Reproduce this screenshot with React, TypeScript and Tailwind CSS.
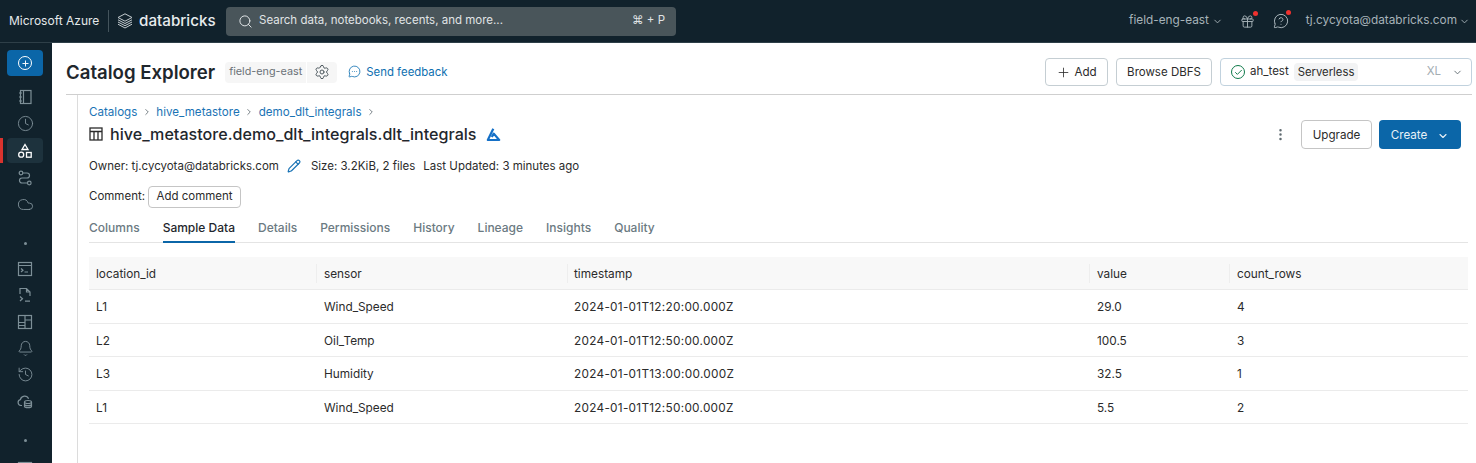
import { Bell, Check, ChevronDown, ChevronRight, Clock, Cloud, Gift, History, MessageCircleMore, MessageCircleQuestion, MoreVertical, Pencil, Plus, Search, Settings } from "lucide-react";

const rows = [
  ["L1", "Wind_Speed", "2024-01-01T12:20:00.000Z", "29.0", "4"],
  ["L2", "Oil_Temp", "2024-01-01T12:50:00.000Z", "100.5", "3"],
  ["L3", "Humidity", "2024-01-01T13:00:00.000Z", "32.5", "1"],
  ["L1", "Wind_Speed", "2024-01-01T12:50:00.000Z", "5.5", "2"],
];

const tabs = ["Columns", "Sample Data", "Details", "Permissions", "History", "Lineage", "Insights", "Quality"];

const gridCols = "grid grid-cols-[227px_251px_522px_140px_1fr]";

function RailIcon({ children, active }: { children: React.ReactNode; active?: boolean }) {
  return (
    <div className={`relative flex h-[25px] w-9 shrink-0 items-center justify-center rounded ${active ? "bg-[#1d323d] text-white" : "text-[#7d8f97]"}`}>
      {active && <span className="absolute left-[-7px] top-0 h-[25px] w-[3px] bg-[#d9332e]" />}
      {children}
    </div>
  );
}

function NotebookIcon() {
  return (
    <svg width="16" height="16" viewBox="0 0 16 16" fill="none" stroke="currentColor" strokeWidth="1.2">
      <rect x="3.5" y="1.5" width="10.5" height="13" />
      <path d="M6.5 1.5V14.5M2 4H5M2 8H5M2 12H5" />
    </svg>
  );
}

function CatalogIcon() {
  return (
    <svg width="16" height="16" viewBox="0 0 16 16" fill="none" stroke="currentColor" strokeWidth="1.3">
      <path d="M8 1.5 11 6.5H5Z" />
      <circle cx="4.2" cy="11.7" r="2.5" />
      <rect x="9.5" y="9.5" width="4.7" height="4.7" />
    </svg>
  );
}

function WorkflowIcon() {
  return (
    <svg width="16" height="16" viewBox="0 0 16 16" fill="none" stroke="currentColor" strokeWidth="1.2">
      <circle cx="4" cy="3" r="1.8" />
      <circle cx="12.3" cy="13" r="1.8" />
      <path d="M5.8 3H10A2.5 2.5 0 0 1 10 8H5A2.5 2.5 0 0 0 5 13H10.5" />
    </svg>
  );
}

function TerminalWindowIcon() {
  return (
    <svg width="16" height="16" viewBox="0 0 16 16" fill="none" stroke="currentColor" strokeWidth="1.2">
      <rect x="1.5" y="1.5" width="13" height="13" />
      <path d="M1.5 4.5H14.5M4 7.5 6 9.2 4 11M7.5 11H11" />
    </svg>
  );
}

function QueryFileIcon() {
  return (
    <svg width="16" height="16" viewBox="0 0 16 16" fill="none" stroke="currentColor" strokeWidth="1.2">
      <path d="M3 7V1.5H9.5L13 5V9M9.5 1.5V5H13" />
      <path d="M3 9.5 5.5 11.7 3 14M8 14.2H13" />
    </svg>
  );
}

function DashboardIcon() {
  return (
    <svg width="16" height="16" viewBox="0 0 16 16" fill="none" stroke="currentColor" strokeWidth="1.2">
      <rect x="1.5" y="1.5" width="13" height="13" />
      <path d="M8 1.5V14.5M1.5 8.5H8M8 6H14.5M1.5 11.5H8" />
    </svg>
  );
}

function CloudDbIcon() {
  return (
    <svg width="16" height="16" viewBox="0 0 16 16" fill="none" stroke="currentColor" strokeWidth="1.2">
      <path d="M5 12.5H3.8A3 3 0 0 1 3.4 6.6 4.3 4.3 0 0 1 11.6 5.8" />
      <ellipse cx="11" cy="9" rx="3.5" ry="1.5" />
      <path d="M7.5 9V13.2C7.5 14 9 14.6 11 14.6S14.5 14 14.5 13.2V9M7.5 11.2C7.5 12 9 12.6 11 12.6S14.5 12 14.5 11.2" />
    </svg>
  );
}

function DatabricksMark() {
  return (
    <svg width="16" height="16" viewBox="0 0 16 16" fill="none" stroke="#c4ccd0" strokeWidth="1">
      <path d="M8 .8 15 4.5 8 8.2 1 4.5Z" />
      <path d="M1 6.8 8 10.5 15 6.8M1 9 8 12.7 15 9M1 11.2 8 15 15 11.2" />
    </svg>
  );
}

function TableIcon() {
  return (
    <svg width="14" height="14" viewBox="0 0 14 14" fill="none" stroke="#2b2b2b" strokeWidth="1.3">
      <rect x="1" y="1" width="12" height="12" />
      <path d="M1 4.5H13M5 4.5V13M9 4.5V13" />
    </svg>
  );
}

function AzureDeltaIcon() {
  return (
    <svg width="15" height="15" viewBox="0 0 15 15" fill="none" stroke="#1570c7" strokeWidth="2.2">
      <path d="M7.3 1.8 1.8 13H13.2L7.8 6.6 5.8 10" strokeLinejoin="round" />
    </svg>
  );
}

export default function App() {
  return (
    <div className="flex h-[463px] w-[1476px] flex-col overflow-hidden bg-white font-['Inter',sans-serif] text-[11.5px] text-[#2b2b2b]">
      {/* Top bar */}
      <header className="flex h-[43px] shrink-0 items-center border-b border-[#2e3f48] bg-[#11222c] pl-[9px] pr-[6px] text-[#a7b3b9]">
        <span className="w-[91px] whitespace-nowrap text-[12px] leading-none text-[#e4e8ea]">Microsoft Azure</span>
        <span className="ml-2 h-[22px] w-px bg-[#44545c]" />
        <span className="ml-2 flex items-center gap-[6px]">
          <DatabricksMark />
          <span className="w-[77px] whitespace-nowrap text-[15.2px] font-medium leading-none text-[#e8ecee]">databricks</span>
        </span>
        <div className="ml-[10px] flex h-[29px] w-[450px] items-center rounded bg-[#49555a] pl-[12px] pr-[11px] text-[#e0e4e6]">
          <Search size={15} strokeWidth={1.6} />
          <span className="ml-[6px] text-[11.5px]">Search data, notebooks, recents, and more...</span>
          <span className="ml-auto text-[11.5px]">⌘ + P</span>
        </div>
        <div className="ml-auto flex items-center">
          <span className="text-[11.8px]">field-eng-east</span>
          <ChevronDown size={11} className="ml-[3px]" />
          <span className="relative ml-[17px]">
            <Gift size={15} strokeWidth={1.5} />
            <span className="absolute right-[-3px] top-[-3px] h-[5px] w-[5px] rounded-full bg-[#f0312e]" />
          </span>
          <span className="relative ml-[18px]">
            <MessageCircleQuestion size={16} strokeWidth={1.5} />
            <span className="absolute right-[-2px] top-[-3px] h-[5px] w-[5px] rounded-full bg-[#f0312e]" />
          </span>
          <span className="ml-[17px] text-[11.8px]">tj.cycyota@databricks.com</span>
          <ChevronDown size={11} className="ml-[2px]" />
        </div>
      </header>

      <div className="flex min-h-0 flex-1">
        {/* Left rail */}
        <aside className="flex w-[52px] shrink-0 flex-col items-start overflow-hidden bg-[#11222c] pl-[7px] pt-[7px]">
          <div className="mb-2 flex h-[26px] w-9 shrink-0 items-center justify-center rounded bg-[#0b66a8] text-white">
            <span className="flex h-[14px] w-[14px] items-center justify-center rounded-full border-[1.5px] border-white">
              <Plus size={9} strokeWidth={2.5} />
            </span>
          </div>
          <div className="flex flex-col gap-[2px]">
            <RailIcon><NotebookIcon /></RailIcon>
            <RailIcon><Clock size={17} strokeWidth={1.3} /></RailIcon>
            <RailIcon active><CatalogIcon /></RailIcon>
            <RailIcon><WorkflowIcon /></RailIcon>
            <RailIcon><Cloud size={17} strokeWidth={1.3} /></RailIcon>
          </div>
          <span className="ml-[16.5px] mb-[11px] mt-[25px] h-[3px] w-[3px] shrink-0 rounded-full bg-[#7d8f97]" />
          <div className="flex flex-col gap-[1.5px]">
            <RailIcon><TerminalWindowIcon /></RailIcon>
            <RailIcon><QueryFileIcon /></RailIcon>
            <RailIcon><DashboardIcon /></RailIcon>
            <RailIcon><Bell size={17} strokeWidth={1.3} /></RailIcon>
            <RailIcon><History size={17} strokeWidth={1.3} /></RailIcon>
            <RailIcon><CloudDbIcon /></RailIcon>
          </div>
          <span className="ml-[16.5px] mb-[15px] mt-[25px] h-[3px] w-[3px] shrink-0 rounded-full bg-[#7d8f97]" />
          <RailIcon><TerminalWindowIcon /></RailIcon>
        </aside>

        <main className="flex min-w-0 flex-1 flex-col pl-[14px] pr-1">
          {/* Page header */}
          <div className="flex h-[52px] shrink-0 items-center border-b border-[#cfcfcf] pt-[7px]">
            <h1 className="text-[18.6px] font-semibold leading-none text-[#1f272d]">Catalog Explorer</h1>
            <div className="ml-[10px] flex h-[21px] items-center gap-px">
              <span className="flex h-full items-center rounded-l bg-[#f6f6f6] px-1 text-[10.8px] text-[#6b7278]">field-eng-east</span>
              <span className="flex h-full w-[30px] items-center justify-center rounded-r bg-[#f6f6f6] text-[#4f5a60]">
                <Settings size={16} strokeWidth={1.5} />
              </span>
            </div>
            <span className="ml-[11px] flex items-center gap-[5px] text-[#0e6fb0]">
              <MessageCircleMore size={13} strokeWidth={1.5} />
              <span className="pt-[2px] text-[11.4px]">Send feedback</span>
            </span>
            <div className="ml-auto flex items-center gap-2">
              <button className="flex h-[28px] w-[63px] items-center justify-center gap-[3px] rounded border border-[#c5ced3] text-[11.6px]">
                <Plus size={15} strokeWidth={1.3} />
                <span className="pt-px">Add</span>
              </button>
              <button className="flex h-[28px] w-[96px] items-center justify-center rounded border border-[#c5ced3] pt-px text-[11.5px]">Browse DBFS</button>
              <div className="flex h-[28px] w-[252px] items-center rounded border border-[#c1d2de] pl-[10px] pr-[8px] text-[11.5px]">
                <span className="flex h-[14px] w-[14px] items-center justify-center rounded-full border-[1.4px] border-[#0f7a4a] text-[#0f7a4a]">
                  <Check size={9} strokeWidth={2.6} />
                </span>
                <span className="ml-[5px]">ah_test</span>
                <span className="ml-[5px] rounded-sm bg-[#f2f3f4] px-1 py-px text-[11.3px]">Serverless</span>
                <span className="ml-auto text-[#a3adb2]">XL</span>
                <ChevronDown size={11} className="ml-[11px] text-[#5f6a70]" />
              </div>
            </div>
          </div>

          {/* Table details */}
          <div className="ml-[11px] flex min-h-0 flex-1 flex-col border-l border-[#dcdcdc] pl-[11px] pr-1">
            <nav className="mt-[9px] flex h-4 items-center text-[11.6px] leading-4 text-[#1a73b5]">
              <span>Catalogs</span>
              <ChevronRight size={10} className="mx-[4.5px] text-[#5f6a70]" />
              <span>hive_metastore</span>
              <ChevronRight size={10} className="mx-[4.5px] text-[#5f6a70]" />
              <span>demo_dlt_integrals</span>
              <ChevronRight size={10} className="mx-[4.5px] text-[#5f6a70]" />
            </nav>
            <div className="relative mt-[2px] flex h-[24px] items-center">
              <TableIcon />
              <span className="ml-[7px] text-[16.1px] font-medium leading-none text-[#1f272d]">hive_metastore.demo_dlt_integrals.dlt_integrals</span>
              <span className="ml-[9px]"><AzureDeltaIcon /></span>
              <div className="absolute right-[7px] top-[-2px] flex items-center">
                <MoreVertical size={15} strokeWidth={2} className="text-[#5f6a70]" />
                <button className="ml-[13px] h-[29px] w-[71px] rounded border border-[#c5c5c5] pt-[2px] text-[11.6px]">Upgrade</button>
                <button className="ml-[7px] flex h-[29px] w-[82px] items-center justify-center gap-[10px] rounded bg-[#0b66a8] pt-[2px] text-[11.6px] text-[#e8f1f7]">
                  Create
                  <ChevronDown size={12} strokeWidth={2.2} />
                </button>
              </div>
            </div>
            <div className="mt-[12px] flex h-4 items-center leading-4">
              <span>Owner: tj.cycyota@databricks.com</span>
              <Pencil size={14} strokeWidth={2} className="ml-2 text-[#1a73b5]" />
              <span className="ml-[10px]">Size: 3.2KiB, 2 files</span>
              <span className="ml-2">Last Updated: 3 minutes ago</span>
            </div>
            <div className="mt-[12px] flex h-[22px] items-center">
              <span>Comment:</span>
              <button className="ml-[3px] h-[22px] w-[93px] rounded border border-[#c5c5c5] text-[11.5px]">Add comment</button>
            </div>
            <div className="mt-[12px] flex h-[23px] shrink-0 items-stretch gap-[23px] border-b border-[#e4e4e4]">
              {tabs.map((tab) => (
                <div key={tab} className={`flex items-center pb-[6px] text-[12px] font-medium ${tab === "Sample Data" ? "mb-[-1px] border-b-[2px] border-[#0b66a8] text-[#1f272d]" : "text-[#6b7a82]"}`}>
                  {tab}
                </div>
              ))}
            </div>

            {/* Sample rows */}
            <div className="mt-[14px] text-[11.8px]">
              <div className={`${gridCols} h-[33px] items-center border-b border-[#ebebeb] bg-[#f8f8f8]`}>
                {["location_id", "sensor", "timestamp", "value", "count_rows"].map((col, j) => (
                  <div key={col} className={`pt-px leading-[18px] ${j === 2 ? "pl-[6px]" : "pl-[7px]"} ${j > 0 ? "border-l border-[#eeeeee]" : ""}`}>{col}</div>
                ))}
              </div>
              {rows.map((row, i) => (
                <div key={i} className={`${gridCols} h-[33.5px] items-center border-b border-[#ebebeb]`}>
                  {row.map((cell, j) => (
                    <div key={j} className={`pt-[4px] ${j === 2 ? "pl-[6px] tracking-[0.28px]" : "pl-[7px]"} ${j > 0 ? "ml-px" : ""}`}>{cell}</div>
                  ))}
                </div>
              ))}
            </div>
          </div>
        </main>
      </div>
    </div>
  );
}
